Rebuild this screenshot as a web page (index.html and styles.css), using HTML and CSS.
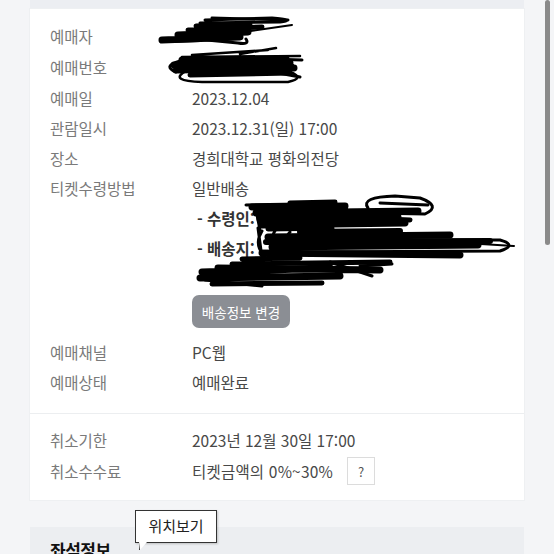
FILE: index.html
```html
<!DOCTYPE html>
<html lang="ko">
<head>
  <meta charset="UTF-8">
  <meta name="viewport" content="width=device-width, initial-scale=1.0">
  <title>예매상세</title>
  <link rel="stylesheet" href="styles.css">
</head>
<body>

<div id="page">
  <div class="head-top"></div>

  <div class="card">
    <div class="info">
      <div class="row"><span class="label">예매자</span><span class="value"></span></div>
      <div class="row row-tall"><span class="label">예매번호</span><span class="value"></span></div>
      <div class="row"><span class="label">예매일</span><span class="value">2023.12.04</span></div>
      <div class="row"><span class="label">관람일시</span><span class="value">2023.12.31(일) 17:00</span></div>
      <div class="row"><span class="label">장소</span><span class="value">경희대학교 평화의전당</span></div>
      <div class="row"><span class="label">티켓수령방법</span><span class="value">일반배송</span></div>
      <div class="row"><span class="label"></span><span class="value sub">- 수령인:</span></div>
      <div class="row"><span class="label"></span><span class="value sub">- 배송지:</span></div>
      <div class="row"><span class="label"></span><span class="value sub"></span></div>
      <div class="row row-btn"><span class="label"></span><button class="btn-change">배송정보 변경</button></div>
      <div class="row"><span class="label">예매채널</span><span class="value">PC웹</span></div>
      <div class="row"><span class="label">예매상태</span><span class="value">예매완료</span></div>
    </div>

    <div class="info cancel">
      <div class="row"><span class="label">취소기한</span><span class="value">2023년 12월 30일 17:00</span></div>
      <div class="row"><span class="label">취소수수료</span><span class="value wide">티켓금액의 0%~30%</span><span class="help">?</span></div>
    </div>
  </div>

  <div class="head">
    <h3>좌석정보</h3>
  </div>

  <div class="tooltip">위치보기</div>

  <!-- redaction marks drawn over the screenshot -->
  <svg class="scribble" width="554" height="554" viewBox="0 0 554 554">
    <g fill="none" stroke="#000" stroke-linecap="round" stroke-linejoin="round">
      <!-- 예매자 -->
      <path stroke-width="7" d="M162 40 L240 37 M178 35 L248 32"/>
      <path stroke-width="5" d="M188 30 L262 27 M196 26 L250 24"/>
      <path stroke-width="3" d="M200 23 L280 22 Q296 20 272 18 L205 20"/>
      <path stroke-width="3" d="M212 18 L288 20 M186 38 L238 43 Q250 45 246 39"/>
      <path stroke-width="2" d="M230 34 L292 25 M168 42 L200 41"/>

      <!-- 예매번호 -->
      <path stroke-width="2.5" d="M192 55 L268 50 M182 57 L300 56 M240 54 L276 48"/>
      <path stroke-width="7" d="M182 60 L286 59 M174 65 L290 63 M176 70 L294 68"/>
      <path stroke-width="5" d="M190 75 L290 73 M186 62 L292 66"/>
      <path stroke-width="3" d="M180 61 Q162 66 176 72 M240 66 L300 77 M200 57 L302 60"/>
      <path stroke-width="2.5" d="M186 71 Q168 81 202 82 L288 82 Q306 78 290 72"/>

      <!-- 수령인 -->
      <path stroke-width="7" d="M252 207 L345 206 M256 213 L418 211 M260 219 L398 217 M262 225 L405 223"/>
      <path stroke-width="5" d="M268 229 L332 228 M290 203 L335 202 M320 216 L410 220"/>
      <path stroke-width="3" d="M368 208 Q360 197 395 196 L420 198 Q442 206 425 214 L372 213"/>
      <path stroke-width="3" d="M380 203 L428 205 M256 210 L260 230 M246 205 L300 204"/>

      <!-- 배송지 -->
      <path stroke-width="7" d="M268 237 L450 235 M272 247 L478 245 M262 253 L460 255"/>
      <path stroke-width="6" d="M300 232 L400 231 M266 242 L490 241"/>
      <path stroke-width="3" d="M330 240 L500 240 Q518 245 500 251 L300 252"/>
      <path stroke-width="3" d="M262 231 Q253 245 266 258 M276 229 Q266 245 282 256 M290 232 Q281 242 292 250 M258 228 L262 258"/>
      <path stroke-width="2" d="M380 238 L514 246"/>

      <!-- 연락처 -->
      <path stroke-width="7" d="M202 272 L330 268 M200 278 L340 276 M218 268 L380 270"/>
      <path stroke-width="5" d="M212 284 L322 283 M232 264 L390 262 M242 259 L300 258"/>
      <path stroke-width="3" d="M205 280 L262 286 M330 262 L372 276 M360 266 L392 264"/>
    </g>
  </svg>

  <div class="scrollbar"></div>
</div>

</body>
</html>
```

FILE: styles.css
```css
body {
  margin: 0;
  background-color: #f4f5f7;
  font-family: 'Noto Sans CJK KR', 'Noto Sans', sans-serif;
  color: #444;
}

#page {
  position: relative;
  width: 554px;
  height: 554px;
  overflow: hidden;
}

.head-top {
  margin: 0 30px;
  height: 9px;
  background-color: #eceef2;
}

.card {
  margin: 0 30px;
  background-color: #fff;
  box-shadow: 0 0 0 1px #eef0f2;
}

.info {
  padding: 12px 20px 16px;
}

.info.cancel {
  border-top: 1px solid #eceef0;
  padding: 11px 20px 14px;
}

.row {
  display: flex;
  align-items: center;
  height: 30px;
  font-size: 15.5px;
}

.row-tall {
  height: 32px;
}

.row-btn {
  height: 33px;
  margin: 2px 0 9px;
}

.cancel .row + .row {
  margin-top: 1px;
}

.label {
  flex: 0 0 142px;
  color: #7a7a7a;
}

.value {
  color: #484848;
}

.value.wide {
  letter-spacing: 0.2px;
}

.value.sub {
  padding-left: 5px;
  font-weight: bold;
  color: #333;
}

.btn-change {
  width: 98px;
  height: 33px;
  padding: 0;
  border: none;
  border-radius: 7px;
  background-color: #8b8e94;
  color: #fff;
  font-family: inherit;
  font-size: 13.5px;
}

.help {
  display: inline-flex;
  align-items: center;
  justify-content: center;
  width: 26px;
  height: 26px;
  margin-left: 14px;
  border: 1px solid #dcdcdc;
  color: #555;
  font-size: 13px;
}

.head {
  margin: 27px 30px 0;
  height: 60px;
  padding: 0 20px;
  background-color: #eceef1;
}

.head h3 {
  margin: 0;
  padding-top: 10px;
  font-size: 17px;
  color: #111;
  letter-spacing: -0.5px;
}

.tooltip {
  position: absolute;
  left: 135px;
  top: 510px;
  width: 80px;
  height: 31px;
  line-height: 30px;
  text-align: center;
  background-color: #fff;
  border: 1px solid #333;
  box-shadow: 1px 1px 2px rgba(0, 0, 0, 0.2);
  font-size: 15px;
  color: #222;
}

.tooltip::after {
  content: '';
  position: absolute;
  left: 3px;
  bottom: -8px;
  width: 0;
  height: 0;
  border-left: 1px solid #333;
  border-right: 7px solid transparent;
  border-top: 8px solid #fff;
}

.scribble {
  position: absolute;
  left: 0;
  top: 0;
  pointer-events: none;
}

.scrollbar {
  position: absolute;
  left: 545px;
  top: 0;
  width: 5px;
  height: 245px;
  border-radius: 3px;
  background-color: #8a8a8a;
}
```
